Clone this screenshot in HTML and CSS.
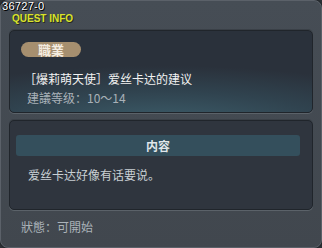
FILE: index.html
```html
<!DOCTYPE html>
<html lang="zh">
<head>
    <meta charset="UTF-8">
    <title>Quest Info</title>
    <link rel="stylesheet" href="styles.css">
</head>
<body>
    <div class="panel">
        <!-- 任务编号 -->
        <div class="quest-id">36727-0</div>

        <div class="panel-title">QUEST INFO</div>

        <!-- 任务名称 -->
        <div class="box box-quest">
            <div class="badge">職業</div>
            <div class="quest-name">［爆莉萌天使］爱丝卡达的建议</div>
            <div class="quest-level">建議等级：10～14</div>
        </div>

        <!-- 内容 -->
        <div class="box box-content">
            <div class="section-bar">内容</div>
            <p class="content-text">爱丝卡达好像有话要说。</p>
        </div>

        <div class="status">狀態：可開始</div>
    </div>
</body>
</html>
```

FILE: styles.css
```css
body {
    margin: 0;
    background-color: #2c3136;
    font-family: "Noto Sans CJK SC", "Noto Sans", sans-serif;
    font-size: 12px;
}

.panel {
    position: relative;
    box-sizing: border-box;
    width: 322px;
    height: 248px;
    padding: 0 8px;
    background: linear-gradient(#464d55, #41474e);
    border: 1px solid #5b6169;
    border-radius: 8px;
    box-shadow: 0 0 0 1px #24282c;
}

.quest-id {
    position: absolute;
    left: 1px;
    top: -1px;
    font-family: "Liberation Sans", sans-serif;
    font-size: 11px;
    line-height: 13px;
    letter-spacing: 0.3px;
    color: #ffffff;
    text-shadow: 1px 1px 0 #000, -1px 0 0 #000;
}

.panel-title {
    height: 17px;
    padding: 12px 0 0 3px;
    font-family: "Liberation Sans", sans-serif;
    font-weight: bold;
    font-size: 10px;
    line-height: 12px;
    color: #d9e32b;
    text-shadow: 1px 1px 0 #262a1c;
}

.box {
    box-sizing: border-box;
    border: 1px solid #20252b;
    border-radius: 5px;
    box-shadow: 0 1px 0 #5b6269, 0 -1px 0 #3a4047;
}

.box-quest {
    height: 83px;
    padding: 11px 11px 0;
    background: radial-gradient(ellipse 120% 90% at 50% 115%, #3d5e6b 0%, #30434f 45%, #2a313b 80%);
}

.badge {
    width: 60px;
    height: 15px;
    border-radius: 8px;
    background-color: #a68f6f;
    color: #f4ece0;
    font-weight: bold;
    font-size: 13px;
    line-height: 15px;
    text-align: center;
}

.quest-name {
    margin: 13px 0 0 3px;
    line-height: 17px;
    color: #f2f2f2;
}

.quest-level {
    margin: 2px 0 0 6px;
    line-height: 17px;
    color: #a9b1b8;
}

.box-content {
    height: 90px;
    margin-top: 7px;
    padding-top: 14px;
    background-color: #2f353e;
}

.section-bar {
    height: 21px;
    margin: 0 12px 0 6px;
    border-radius: 3px;
    background-color: #344f5c;
    color: #dfe6ea;
    font-weight: bold;
    line-height: 21px;
    text-align: center;
}

.content-text {
    margin: 10px 0 0 18px;
    line-height: 17px;
    color: #c9d0d4;
}

.status {
    margin: 8px 0 0 12px;
    line-height: 17px;
    color: #abb3b9;
}
```
